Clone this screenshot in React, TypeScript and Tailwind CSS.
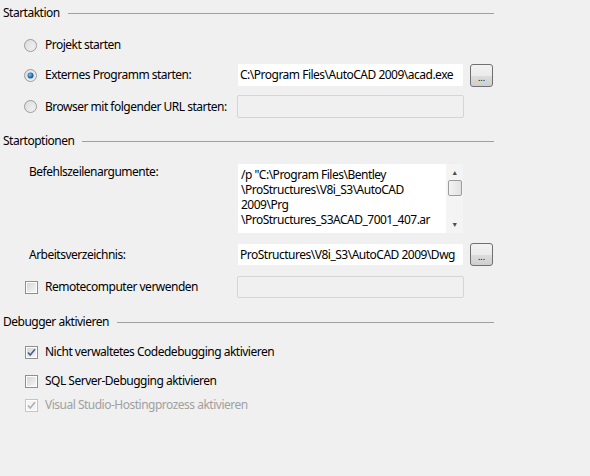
import React from 'react';

const FONT = "font-['Noto_Sans',sans-serif] text-[12px] leading-4 tracking-[-0.5px] text-black";

function SectionHeader({ title }: { title: string }) {
  return (
    <div className="flex h-4 items-center pl-[3px]">
      <span className="whitespace-nowrap">{title}</span>
      <div className="ml-[8px] mt-[1px] flex-1 border-t border-[#a0a0a0]" />
    </div>
  );
}

function Radio({ checked }: { checked?: boolean }) {
  return (
    <svg width="13" height="13" viewBox="0 0 13 13" className="shrink-0">
      <defs>
        <linearGradient id="rbg" x1="0" y1="0" x2="1" y2="1">
          <stop offset="0" stopColor="#d8d8d8" />
          <stop offset="1" stopColor="#f8f8f8" />
        </linearGradient>
        <radialGradient id="rdot" cx="0.4" cy="0.4" r="0.7">
          <stop offset="0" stopColor="#7fc4f0" />
          <stop offset="0.6" stopColor="#1e6fb0" />
          <stop offset="1" stopColor="#0f3f70" />
        </radialGradient>
      </defs>
      <circle cx="6.5" cy="6.5" r="6" fill="url(#rbg)" stroke="#9a9a9a" strokeWidth="1" />
      <circle cx="6.5" cy="6.5" r="4.5" fill="none" stroke="#e6e6e6" strokeWidth="1" />
      {checked && <circle cx="6.5" cy="6.5" r="3" fill="url(#rdot)" />}
    </svg>
  );
}

function Check({ checked, disabled }: { checked?: boolean; disabled?: boolean }) {
  return (
    <svg width="13" height="13" viewBox="0 0 13 13" className="shrink-0">
      <defs>
        <linearGradient id="cbg" x1="0" y1="0" x2="1" y2="1">
          <stop offset="0" stopColor="#d6d6d6" />
          <stop offset="1" stopColor="#f6f6f6" />
        </linearGradient>
      </defs>
      <rect x="0.5" y="0.5" width="12" height="12" fill="#ffffff" stroke={disabled ? '#c4c4c4' : '#8e8f8f'} />
      <rect x="2" y="2" width="9" height="9" fill={disabled ? '#f4f4f4' : 'url(#cbg)'} />
      {checked && (
        <path
          d="M3 6.5 L5.2 9 L10 3.2"
          fill="none"
          stroke={disabled ? '#b0b0b0' : '#4a5c94'}
          strokeWidth="1.6"
        />
      )}
    </svg>
  );
}

function BrowseButton() {
  return (
    <div className="ml-[6px] flex h-[23px] w-[23px] shrink-0 items-end justify-center rounded-[3px] border border-[#707070] bg-[linear-gradient(#f2f2f2_0%,#ebebeb_50%,#dddddd_50%,#cfcfcf_100%)] pb-[4px] text-[9px] leading-[9px] tracking-normal">
      ...
    </div>
  );
}

function TextBox({ value, disabled, h = 'h-[23px]' }: { value?: string; disabled?: boolean; h?: string }) {
  return (
    <div
      className={`${h} w-[227px] overflow-hidden whitespace-nowrap rounded-[2px] border px-[2px] leading-[21px] ${
        disabled ? 'border-[#d5d5d5] bg-[#f0f0f0]' : 'border-[#f0f0f0] bg-white'
      }`}
    >
      {value}
    </div>
  );
}

export default function App() {
  return (
    <div className={`${FONT} h-[476px] w-[590px] bg-[#f0f0f0]`}>
      <div className="flex w-[494px] flex-col pt-[5px]">
        <SectionHeader title="Startaktion" />

        <div className="mt-[16px] flex h-4 items-center pl-[24px]">
          <Radio />
          <span className="ml-[8px]">Projekt starten</span>
        </div>

        <div className="mt-[10px] flex items-center">
          <div className="flex w-[237px] items-center pl-[24px]">
            <Radio checked />
            <span className="ml-[8px]">Externes Programm starten:</span>
          </div>
          <TextBox value="C:\Program Files\AutoCAD 2009\acad.exe" h="h-[24px]" />
          <BrowseButton />
        </div>

        <div className="mt-[8px] flex items-center">
          <div className="flex w-[237px] items-center pl-[24px]">
            <Radio />
            <span className="ml-[8px] whitespace-nowrap">Browser mit folgender URL starten:</span>
          </div>
          <TextBox disabled />
        </div>

        <div className="mt-[15px]">
          <SectionHeader title="Startoptionen" />
        </div>

        <div className="mt-[14px] flex items-start">
          <div className="w-[237px] pl-[29px] pt-[1px]">Befehlszeilenargumente:</div>
          <div className="flex h-[71px] w-[227px] rounded-[2px] border border-[#f0f0f0] bg-white">
            <div className="flex-1 overflow-hidden whitespace-nowrap pl-[3px] pt-[3px]">
              <div className="h-[15px] leading-[15px]">/p "C:\Program Files\Bentley</div>
              <div className="h-[15px] leading-[15px]">\ProStructures\V8i_S3\AutoCAD</div>
              <div className="h-[15px] leading-[15px]">2009\Prg</div>
              <div className="h-[15px] leading-[15px]">\ProStructures_S3ACAD_7001_407.ar</div>
            </div>
            <div className="flex w-[17px] flex-col items-center bg-[#f4f4f4] py-[1px]">
              <div className="flex h-[15px] items-center text-[7px] leading-none text-[#4d4d4d]">▲</div>
              <div className="h-[16px] w-[14px] rounded-[2px] border border-[#9c9c9c] bg-[linear-gradient(90deg,#f3f3f3,#e2e2e2)]" />
              <div className="flex-1" />
              <div className="flex h-[15px] items-center text-[7px] leading-none text-[#4d4d4d]">▼</div>
            </div>
          </div>
        </div>

        <div className="mt-[9px] flex items-center">
          <div className="w-[237px] pl-[29px]">Arbeitsverzeichnis:</div>
          <TextBox value="ProStructures\V8i_S3\AutoCAD 2009\Dwg" />
          <BrowseButton />
        </div>

        <div className="mt-[10px] flex items-center">
          <div className="flex w-[237px] items-center pl-[25px]">
            <Check />
            <span className="ml-[7px]">Remotecomputer verwenden</span>
          </div>
          <TextBox disabled h="h-[22px]" />
        </div>

        <div className="mt-[16px]">
          <SectionHeader title="Debugger aktivieren" />
        </div>

        <div className="mt-[14px] flex h-4 items-center pl-[25px]">
          <Check checked />
          <span className="ml-[7px]">Nicht verwaltetes Codedebugging aktivieren</span>
        </div>
        <div className="mt-[13px] flex h-4 items-center pl-[25px]">
          <Check />
          <span className="ml-[7px]">SQL Server-Debugging aktivieren</span>
        </div>
        <div className="mt-[8px] flex h-4 items-center pl-[25px]">
          <Check checked disabled />
          <span className="ml-[7px] text-[#a0a0a0]">Visual Studio-Hostingprozess aktivieren</span>
        </div>
      </div>
    </div>
  );
}
